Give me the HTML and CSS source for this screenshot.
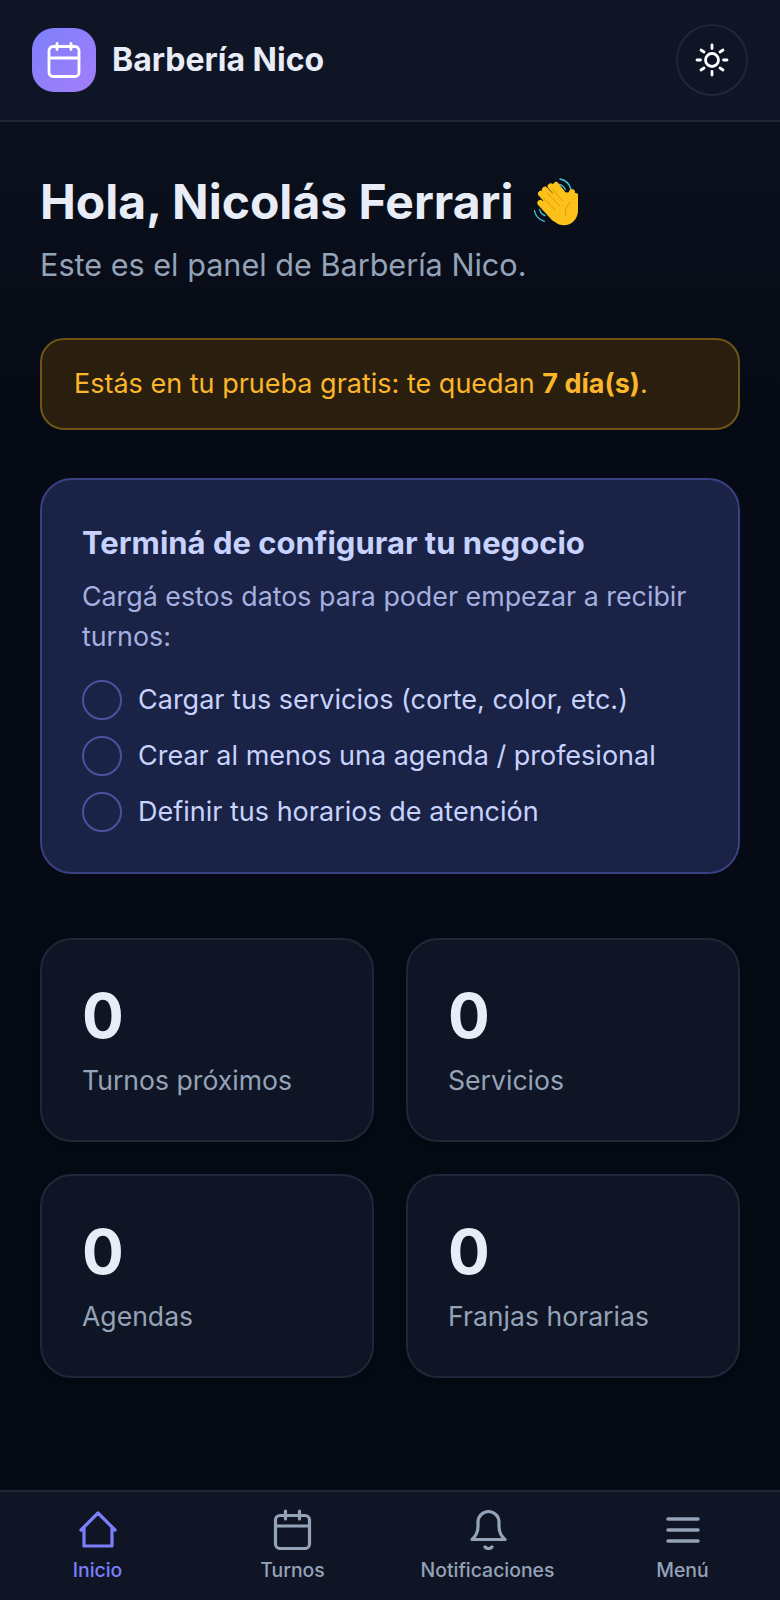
FILE: index.html
```html
<!DOCTYPE html>
<html lang="es">
<head>
    <meta charset="UTF-8">
    <meta name="viewport" content="width=device-width, initial-scale=1.0">
    <title>Barbería Nico</title>
    <link rel="stylesheet" href="styles.css">
</head>
<body>
    <div class="app">
        <header class="topbar">
            <div class="brand">
                <div class="brand-logo">
                    <svg width="40" height="40" viewBox="0 0 40 40" fill="none" stroke="#fff" stroke-width="2.800" stroke-linecap="round" stroke-linejoin="round">
                        <rect x="5" y="6.500" width="30" height="30" rx="4"/>
                        <path d="M13 3.500v6M27 3.500v6M5 18h30"/>
                    </svg>
                </div>
                <span class="brand-name">Barbería Nico</span>
            </div>
            <button class="theme-btn" type="button" aria-label="Cambiar tema">
                <svg width="36" height="36" viewBox="0 0 36 36" fill="none" stroke="#fff" stroke-width="2.800" stroke-linecap="round">
                    <circle cx="18" cy="18" r="6.500"/>
                    <path d="M18 3v3.500M18 29.500V33M3 18h3.500M29.500 18H33M7 8l3 2M26 26l3 2M7 28l3-2M26 10l3-2"/>
                </svg>
            </button>
        </header>

        <main class="content">
            <h1 class="greeting">Hola, Nicolás Ferrari
                <svg class="wave" width="45" height="50" viewBox="100 50 135 150" fill="none" stroke-linecap="round">
                    <!-- waves -->
                    <path d="M178 56c16 3 28 14 32 30M176 72c9 2 15 8 18 16M101 150c3 16 14 28 30 33M117 148c2 9 8 15 16 18" stroke="#45c4dc" stroke-width="4"/>
                    <!-- hand -->
                    <path d="M150 100l65 -5 17 5v50c0 28-20 45-42 45-18 0-30-10-40-24l-30-42z" fill="#fcc21b"/>
                    <path d="M190 150c4-18 14-28 24-55" stroke="#fcc21b" stroke-width="18"/>
                    <path d="M121 100l50 55M133 88l52 56M150 78l46 52M166 74l34 44M119 128l42 46" stroke="#fcc21b" stroke-width="18"/>
                    <path d="M128 112l36 38M141 99l36 38M157 89l30 34M195 165c-3-14 2-28 14-40" stroke="#e59600" stroke-width="3"/>
                </svg>
            </h1>
            <p class="subtitle">Este es el panel de Barbería Nico.</p>

            <div class="trial-alert">Estás en tu prueba gratis: te quedan <strong>7 día(s)</strong>.</div>

            <section class="setup-card">
                <h2>Terminá de configurar tu negocio</h2>
                <p>Cargá estos datos para poder empezar a recibir turnos:</p>
                <ul class="setup-list">
                    <li><span class="check"></span>Cargar tus servicios (corte, color, etc.)</li>
                    <li><span class="check"></span>Crear al menos una agenda / profesional</li>
                    <li><span class="check"></span>Definir tus horarios de atención</li>
                </ul>
            </section>

            <section class="stats">
                <div class="stat-card"><div class="stat-value">0</div><div class="stat-label">Turnos próximos</div></div>
                <div class="stat-card"><div class="stat-value">0</div><div class="stat-label">Servicios</div></div>
                <div class="stat-card"><div class="stat-value">0</div><div class="stat-label">Agendas</div></div>
                <div class="stat-card"><div class="stat-value">0</div><div class="stat-label">Franjas horarias</div></div>
            </section>
        </main>

        <nav class="bottom-nav">
            <a class="nav-item active" href="#">
                <svg width="44" height="44" viewBox="0 0 44 44" fill="none" stroke="currentColor" stroke-width="3.200" stroke-linecap="round" stroke-linejoin="round">
                    <path d="M5 24 22 7l17 17M8 22v18h28V22"/>
                </svg>
                <span>Inicio</span>
            </a>
            <a class="nav-item" href="#">
                <svg width="44" height="44" viewBox="0 0 44 44" fill="none" stroke="currentColor" stroke-width="3.200" stroke-linecap="round" stroke-linejoin="round">
                    <rect x="4.500" y="9.500" width="34" height="33" rx="4.500"/>
                    <path d="M14.500 5v8M28.500 5v8M4.500 20h34"/>
                </svg>
                <span>Turnos</span>
            </a>
            <a class="nav-item" href="#">
                <svg width="44" height="44" viewBox="0 0 44 44" fill="none" stroke="currentColor" stroke-width="3.200" stroke-linecap="round" stroke-linejoin="round">
                    <path d="M6 33.500c3-3 6-6 6-13V16a10.500 10.500 0 0 1 21 0v4.500c0 7 3 10 6 13z"/>
                    <path d="M19 41c2 2 5 2 7 0"/>
                </svg>
                <span>Notificaciones</span>
            </a>
            <a class="nav-item" href="#">
                <svg width="44" height="44" viewBox="0 0 44 44" fill="none" stroke="currentColor" stroke-width="3.500" stroke-linecap="round">
                    <path d="M7 13h30M7 24h30M7 35h30"/>
                </svg>
                <span>Menú</span>
            </a>
        </nav>
    </div>
</body>
</html>
```

FILE: styles.css
```css
* {
    box-sizing: border-box;
}
body {
    font-family: 'Inter', 'Liberation Sans', sans-serif;
    background: linear-gradient(180deg, #0b101d 120px, #050a15 420px);
    color: #e8ecf6;
    margin: 0;
}
.app {
    height: 1600px;
    display: flex;
    flex-direction: column;
}
.topbar {
    height: 122px;
    padding: 0 32px;
    display: flex;
    justify-content: space-between;
    align-items: center;
    background-color: #0f1525;
    border-bottom: 2px solid #1f2738;
}
.brand {
    display: flex;
    align-items: center;
    gap: 16px;
}
.brand-logo {
    width: 64px;
    height: 64px;
    border-radius: 22px;
    background: linear-gradient(135deg, #7d80fb, #a37dfb);
    display: flex;
    align-items: center;
    justify-content: center;
}
.brand-name {
    font-size: 32px;
    font-weight: 700;
    padding-bottom: 2px;
}
.theme-btn {
    width: 72px;
    height: 72px;
    border-radius: 50%;
    border: 2px solid #1f2738;
    background: transparent;
    display: flex;
    align-items: center;
    justify-content: center;
    padding: 0;
}
.content {
    flex: 1;
    padding: 52px 40px 0;
}
.greeting {
    font-size: 48px;
    font-weight: 700;
    line-height: 56px;
    margin: 0 0 15px;
    display: flex;
    align-items: center;
    gap: 21px;
}
.subtitle {
    font-size: 30.6px;
    line-height: 40px;
    color: #94a3b8;
    margin: 0 0 53px;
}
.trial-alert {
    padding: 26px 32px;
    font-size: 27px;
    line-height: 36px;
    color: #fbb62a;
    background-color: #2a1e0f;
    border: 2px solid #6f5418;
    border-radius: 24px;
    margin-bottom: 48px;
}
.trial-alert strong {
    font-weight: 700;
}
.setup-card {
    padding: 40px;
    background-color: #1a2245;
    border: 2px solid #3a4182;
    border-radius: 32px;
    margin-bottom: 64px;
    color: #c7d2fe;
}
.setup-card h2 {
    font-size: 31px;
    line-height: 46px;
    font-weight: 700;
    margin: 0 0 10px;
}
.setup-card p {
    font-size: 26.8px;
    line-height: 40px;
    color: #a5b0e0;
    margin: 0 0 24px;
}
.setup-list {
    list-style: none;
    margin: 0;
    padding: 0;
    display: flex;
    flex-direction: column;
    gap: 16px;
}
.setup-list li {
    display: flex;
    align-items: center;
    gap: 16px;
    font-size: 27px;
    line-height: 40px;
}
.check {
    width: 40px;
    height: 40px;
    border-radius: 50%;
    border: 2px solid #4a52a0;
}
.stats {
    display: grid;
    grid-template-columns: 1fr 1fr;
    gap: 32px;
}
.stat-card {
    height: 204px;
    padding: 40px 40px 0;
    background-color: #0f1525;
    border: 2px solid #1f2738;
    border-radius: 32px;
    box-shadow: 0 4px 12px rgba(0, 0, 0, 0.3);
}
.stat-value {
    font-size: 62px;
    font-weight: 700;
    line-height: 72px;
    margin-bottom: 8px;
}
.stat-label {
    font-size: 26.6px;
    line-height: 40px;
    color: #94a3b8;
}
.bottom-nav {
    height: 110px;
    display: grid;
    grid-template-columns: repeat(4, 1fr);
    background-color: #0f1525;
    border-top: 2px solid #1f2738;
}
.nav-item {
    display: flex;
    flex-direction: column;
    align-items: center;
    padding-top: 14px;
    gap: 6px;
    font-size: 19.4px;
    font-weight: 500;
    line-height: 28px;
    color: #94a3b8;
    text-decoration: none;
}
.nav-item.active {
    color: #7b7ffb;
}
```
